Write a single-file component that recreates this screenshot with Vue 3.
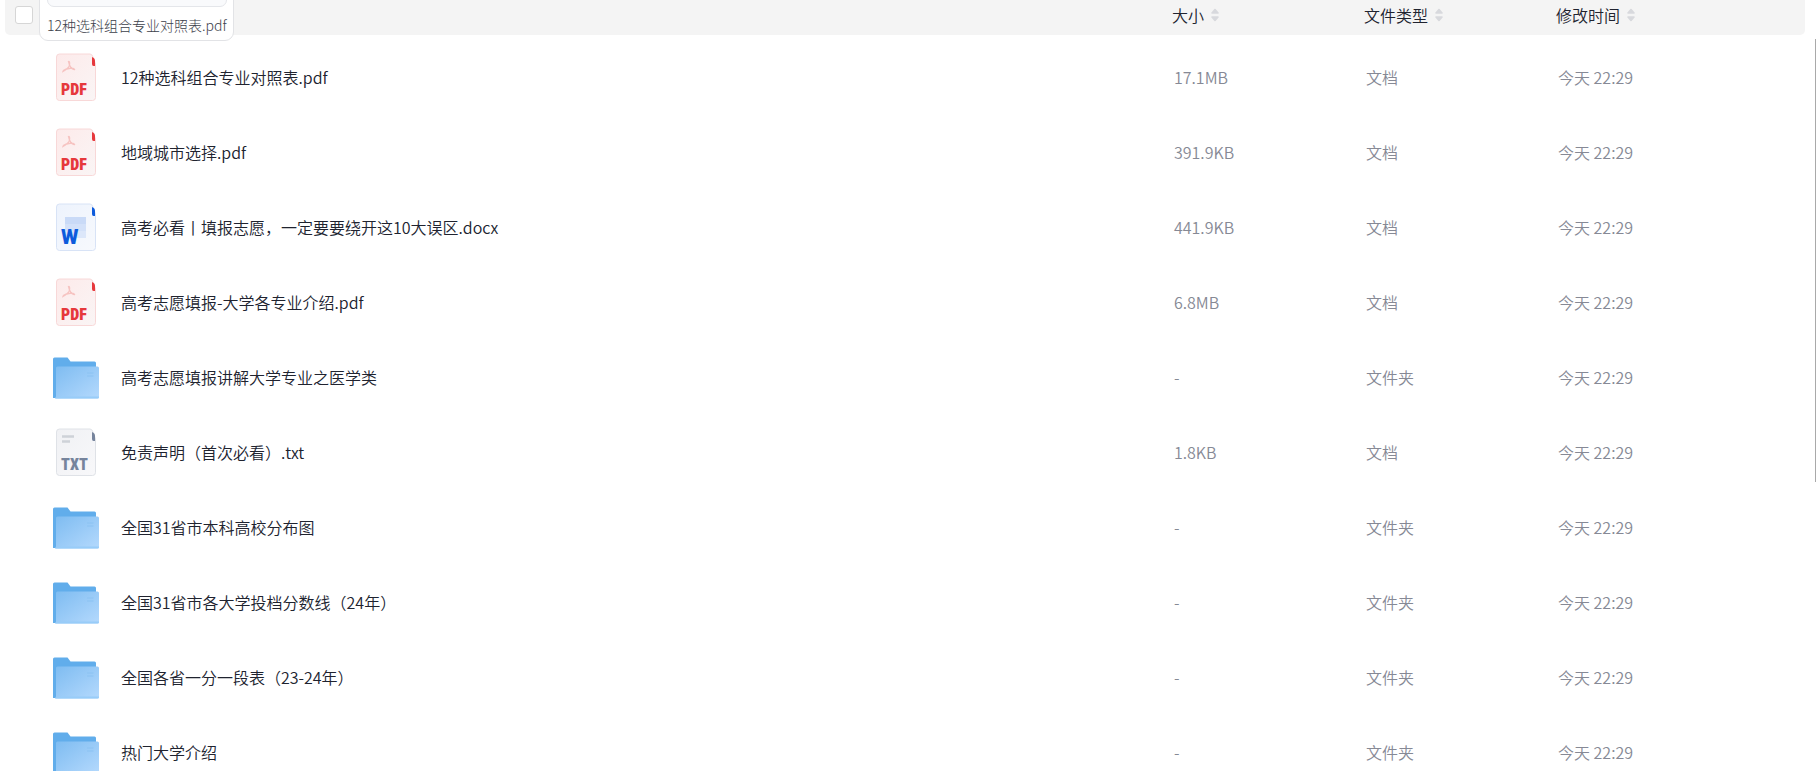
<template>
  <div class="file-list">
    <table class="table">
      <colgroup>
        <col class="col-check">
        <col>
        <col class="col-size">
        <col class="col-type">
        <col class="col-time">
      </colgroup>
      <thead>
        <tr>
          <th class="cell-check">
            <input v-model="allChecked" type="checkbox" class="checkbox" aria-label="全选">
          </th>
          <th></th>
          <th v-for="column in columns" :key="column.key">
            <button type="button" class="sort" @click="sortBy(column.key)">
              <span>{{ column.label }}</span>
              <svg class="sort_icon" width="8" height="14" viewBox="0 0 8 14">
                <path d="M4 1.500 L7 5 H1 Z M4 12.500 L7 9 H1 Z" fill="#d8d9dd" stroke="#d8d9dd" stroke-width="1.6" stroke-linejoin="round" />
              </svg>
            </button>
          </th>
        </tr>
      </thead>
      <tbody>
        <tr v-for="file in sortedFiles" :key="file.name">
          <td></td>
          <td>
            <div class="file">
              <svg v-if="file.icon === 'folder'" class="file_icon" width="48" height="48" viewBox="0 -1 48 48">
                <path d="M1 5 a1.500 1.500 0 0 1 1.500 -1.500 H15.500 L18.500 7.500 H42.500 a1.500 1.500 0 0 1 1.500 1.500 V44 H1 Z" fill="#61adeb" />
                <path d="M4 14 a1.500 1.500 0 0 1 1.500 -1.500 H45.500 a1.500 1.500 0 0 1 1.500 1.500 V43 a1.500 1.500 0 0 1 -1.500 1.500 H3 Q4 44 4 43 Z" fill="url(#folder-bg)" />
                <path d="M4 42.500 H47 V43 a1.500 1.500 0 0 1 -1.500 1.500 H3 Z" fill="#98ccf8" />
                <path d="M35 19 H41.500 M35 22 H41.500" stroke="#8bc2f2" stroke-width="1" />
              </svg>
              <svg v-else class="file_icon" width="48" height="48" viewBox="0 -1 48 48">
                <path d="M7.500 0 H38 Q40 0 41 3 L43.500 10 V43.500 a3 3 0 0 1 -3 3 H7.500 a3 3 0 0 1 -3 -3 V3 a3 3 0 0 1 3 -3 Z" :fill="`url(#${file.icon}-bg)`" :stroke="palette[file.icon].line" />
                <path d="M40 3 Q43 4 43 7 V12 H41.500 Q40 12 40 10 Z" :fill="palette[file.icon].main" />
                <path v-if="file.icon === 'pdf'" d="M16.500 7.500 Q18 7 17.500 11 Q17 14 11 17.500 Q11.500 15.500 17 14.500 Q22 13.500 22.500 15.500 Q20 16 17.500 11 Z" fill="none" stroke="#f6c3c1" stroke-width="1.3" />
                <g v-if="file.icon === 'word'">
                  <rect x="13" y="13" width="21" height="21" fill="#dce7fa" />
                  <rect x="13" y="13" width="21" height="7" fill="#c9daf7" />
                  <rect x="13" y="20" width="21" height="7" fill="#d3e1f9" />
                </g>
                <path v-if="file.icon === 'txt'" d="M10 7.500 H22 M10 12.500 H18" stroke="#ced2d8" stroke-width="2.500" />
                <text class="file_tag" :class="'file_tag-' + file.icon" x="9" :y="file.icon === 'word' ? 40 : 41" :fill="palette[file.icon].main">{{ palette[file.icon].tag }}</text>
              </svg>
              <a href="#" class="file_name" @click.prevent>{{ file.name }}</a>
            </div>
          </td>
          <td class="info">{{ file.size }}</td>
          <td class="info">{{ file.type }}</td>
          <td class="info">{{ file.time }}</td>
        </tr>
      </tbody>
    </table>

    <div class="preview">
      <div class="preview_box"></div>
      <span>12种选科组合专业对照表.pdf</span>
    </div>
    <div class="scrollbar"></div>

    <svg class="defs" width="0" height="0" aria-hidden="true">
      <defs>
        <linearGradient id="folder-bg" x1="0" y1="0" x2="1" y2="1">
          <stop offset="0" stop-color="#7ebcf1" />
          <stop offset="1" stop-color="#b4d9fd" />
        </linearGradient>
        <linearGradient v-for="(color, key) in palette" :id="key + '-bg'" :key="key" x1="0" y1="0" x2="1" y2="1">
          <stop offset="0" :stop-color="color.from" />
          <stop offset="1" :stop-color="color.to" />
        </linearGradient>
      </defs>
    </svg>
  </div>
</template>

<script setup>
import { computed, ref } from 'vue'

const columns = [
  { key: 'size', label: '大小' },
  { key: 'type', label: '文件类型' },
  { key: 'time', label: '修改时间' }
]

const palette = {
  pdf: { tag: 'PDF', main: '#e6383c', line: '#f8d8d8', from: '#fdeaea', to: '#faf5f5' },
  word: { tag: 'W', main: '#0d5bdc', line: '#d8e3f6', from: '#edf3fd', to: '#f7f9fd' },
  txt: { tag: 'TXT', main: '#76849c', line: '#dfe2e7', from: '#f0f1f4', to: '#f8f8fa' }
}

const time = '今天 22:29'

const files = [
  { name: '12种选科组合专业对照表.pdf', icon: 'pdf', size: '17.1MB', type: '文档', time },
  { name: '地域城市选择.pdf', icon: 'pdf', size: '391.9KB', type: '文档', time },
  { name: '高考必看丨填报志愿，一定要要绕开这10大误区.docx', icon: 'word', size: '441.9KB', type: '文档', time },
  { name: '高考志愿填报-大学各专业介绍.pdf', icon: 'pdf', size: '6.8MB', type: '文档', time },
  { name: '高考志愿填报讲解大学专业之医学类', icon: 'folder', size: '-', type: '文件夹', time },
  { name: '免责声明（首次必看）.txt', icon: 'txt', size: '1.8KB', type: '文档', time },
  { name: '全国31省市本科高校分布图', icon: 'folder', size: '-', type: '文件夹', time },
  { name: '全国31省市各大学投档分数线（24年）', icon: 'folder', size: '-', type: '文件夹', time },
  { name: '全国各省一分一段表（23-24年）', icon: 'folder', size: '-', type: '文件夹', time },
  { name: '热门大学介绍', icon: 'folder', size: '-', type: '文件夹', time }
]

const allChecked = ref(false)
const sortKey = ref('')

const sortedFiles = computed(() => {
  if (!sortKey.value) return files
  return [...files].sort((a, b) => a[sortKey.value].localeCompare(b[sortKey.value]))
})

function sortBy(key) {
  sortKey.value = sortKey.value === key ? '' : key
}
</script>

<style>
body {
  background: #fff;
}
</style>

<style scoped>
.file-list {
  position: relative;
  height: 100vh;
  padding: 0 11px 0 5px;
  box-sizing: border-box;
  overflow: hidden;
  font-family: "Noto Sans CJK SC", sans-serif;
  font-size: 16px;
  font-weight: 350;
  color: #20232f;
}

.table {
  width: 100%;
  table-layout: fixed;
  border-collapse: separate;
  border-spacing: 0;
}

.col-check {
  width: 47px;
}

.col-size, .col-type {
  width: 192px;
}

.col-time {
  width: 249px;
}

th {
  height: 35px;
  padding: 0;
  background: #f4f4f4;
  text-align: left;
  font-weight: inherit;
}

th:first-child {
  border-bottom-left-radius: 5px;
}

th:last-child {
  border-bottom-right-radius: 5px;
}

tbody::before {
  content: "";
  display: block;
  height: 4px;
}

td {
  height: 75px;
  padding: 0;
}

.cell-check {
  padding: 0 0 5px 10px;
  height: 30px;
}

.checkbox {
  display: block;
  appearance: none;
  width: 18px;
  height: 18px;
  margin: 0;
  border: 1px solid #d6d6d6;
  border-radius: 3px;
  background: #fff;
}

.checkbox:checked {
  background: #0d5bdc;
}

.sort {
  display: flex;
  align-items: center;
  gap: 7px;
  height: 30px;
  padding: 0;
  margin-bottom: 5px;
  border: 0;
  background: none;
  font: inherit;
  color: inherit;
  cursor: pointer;
}

.file {
  display: flex;
  align-items: center;
  gap: 21px;
}

.file_icon {
  flex-shrink: 0;
}

.file_tag {
  font-family: "Roboto Condensed", Roboto, sans-serif;
  font-size: 16px;
  font-weight: 900;
}

.file_tag-word {
  font-family: Roboto, sans-serif;
  font-size: 20px;
}

.file_name {
  color: inherit;
  text-decoration: none;
}

.file_name:hover {
  color: #0d5bdc;
}

.info {
  padding-left: 2px;
  color: #868995;
}

/* dragged file card, partly above the list */
.preview {
  position: absolute;
  top: -60px;
  left: 39px;
  padding: 7px 6px 5px 7px;
  border: 1px solid #e2e3e6;
  border-radius: 9px;
  background: #fff;
  font-size: 14px;
  font-weight: 300;
  line-height: 20px;
  color: #3b3e4a;
}

.preview_box {
  height: 57px;
  margin-bottom: 8px;
  border: 1px solid #e4e6ea;
  border-radius: 7px;
  background: #f9fafc;
}

.scrollbar {
  position: absolute;
  top: 39px;
  right: 0;
  width: 1px;
  height: 443px;
  background: #a9a9a9;
}

.defs {
  position: absolute;
}
</style>
